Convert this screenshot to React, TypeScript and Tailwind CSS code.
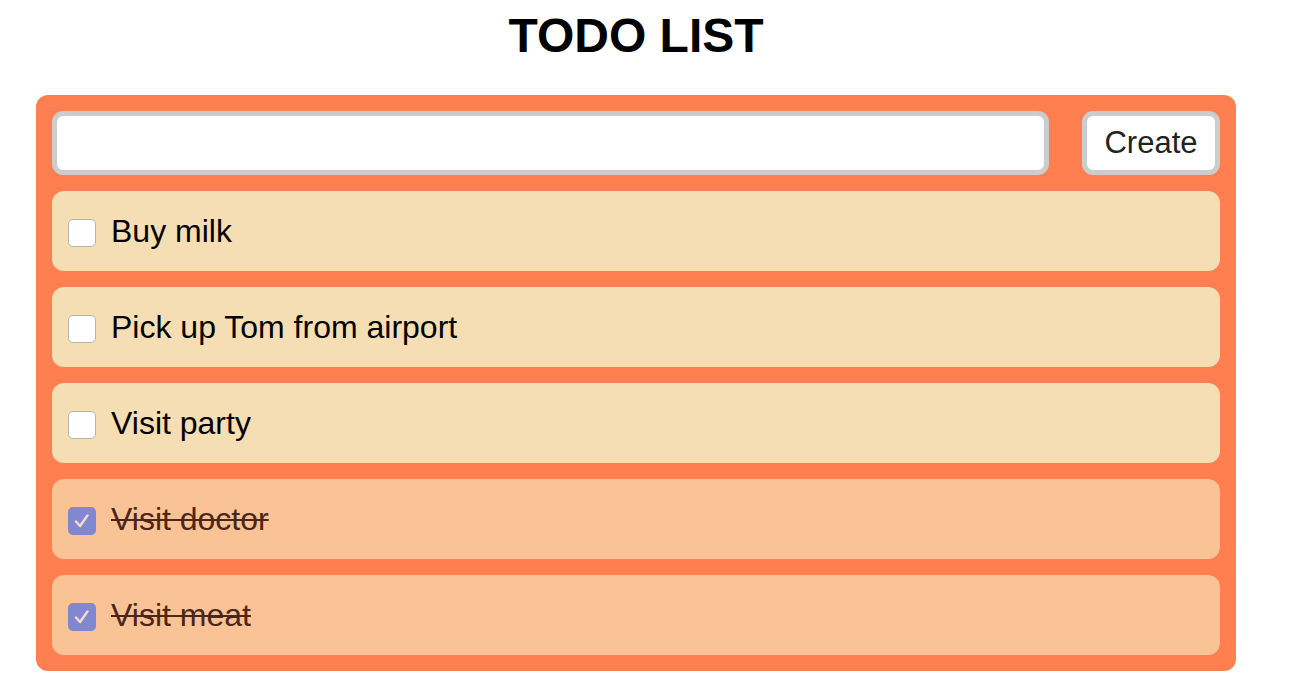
import React from "react";

const items = [
  { text: "Buy milk", done: false },
  { text: "Pick up Tom from airport", done: false },
  { text: "Visit party", done: false },
  { text: "Visit doctor", done: true },
  { text: "Visit meat", done: true },
];

export default function App() {
  return (
    <div
      className="min-h-[695px] w-[1294px] bg-white"
      style={{ fontFamily: '"Liberation Sans", Arial, sans-serif' }}
    >
      <div className="ml-[36px] w-[1200px]">
        <h1 className="pt-[8px] text-center text-[48px] font-bold leading-[55px] text-black">
          TODO LIST
        </h1>
        <div className="mt-[32px] flex flex-col gap-4 rounded-[12px] bg-[#ff7f50] p-4">
          <div className="flex h-[64px] gap-[33px]">
            <div className="flex-1 rounded-[11px] border-[5px] border-[#cccccc] bg-white" />
            <div className="flex w-[138px] items-center justify-center rounded-[11px] border-[5px] border-[#cccccc] bg-white text-[31px] text-[#222222]">
              Create
            </div>
          </div>
          {items.map((it) => (
            <div
              key={it.text}
              className={
                it.done
                  ? "flex h-[80px] items-center gap-[15px] rounded-[12px] bg-[#f9c396] px-4"
                  : "flex h-[80px] items-center gap-[15px] rounded-[12px] bg-[#f5deb3] px-4"
              }
            >
              {it.done ? (
                <div className="mt-[3px] flex h-[28px] w-[28px] items-center justify-center rounded-[5px] bg-[#7f88d0]">
                  <svg width="28" height="28" viewBox="0 0 28 28">
                    <path
                      d="M8 14.5 L12 19 L19.5 8.5"
                      fill="none"
                      stroke="#ffd8ca"
                      strokeWidth="2.4"
                      strokeLinecap="round"
                      strokeLinejoin="round"
                    />
                  </svg>
                </div>
              ) : (
                <div className="mt-[3px] h-[28px] w-[28px] rounded-[5px] border border-[#b5b5b5] bg-white" />
              )}
              <span
                className={
                  it.done
                    ? "text-[32px] leading-none text-[#4c2618] line-through decoration-[2px]"
                    : "text-[32px] leading-none text-black"
                }
              >
                {it.text}
              </span>
            </div>
          ))}
        </div>
      </div>
    </div>
  );
}
